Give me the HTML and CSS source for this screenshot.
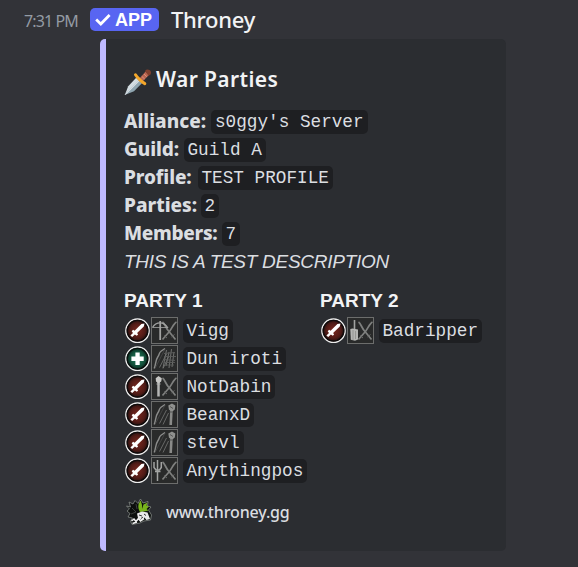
FILE: index.html
```html
<!DOCTYPE html>
<html lang="en">
<head>
<meta charset="UTF-8">
<meta name="viewport" content="width=device-width, initial-scale=1.0">
<title>Throney - War Parties</title>
<link rel="stylesheet" href="styles.css">
</head>
<body>
<!-- shared icons -->
<svg class="defs" width="0" height="0">
    <defs>
        <radialGradient id="redFill"><stop offset="0" stop-color="#79271e"/><stop offset="0.6" stop-color="#541c17"/><stop offset="1" stop-color="#1c0d0d"/></radialGradient>
        <radialGradient id="greenFill"><stop offset="0" stop-color="#23805d"/><stop offset="0.6" stop-color="#14543d"/><stop offset="1" stop-color="#071b15"/></radialGradient>
        <linearGradient id="blade" x1="0" y1="0" x2="1" y2="1"><stop offset="0.45" stop-color="#d3dde2"/><stop offset="0.55" stop-color="#8fa5b0"/></linearGradient>
    </defs>
    <symbol id="dps" viewBox="0 0 27 28">
        <circle cx="13.5" cy="13.7" r="11.6" fill="url(#redFill)" stroke="#ececec" stroke-width="1.5"/>
        <circle cx="13.5" cy="13.7" r="10.3" fill="none" stroke="#100b0b" stroke-width="1.3"/>
        <path d="M20.5 6.5L19.8 9.4L13.1 16.1L14.1 17.5L12.8 18.8L10.9 17.4L8.2 20.1L6.4 18.5L9 15.9L7.7 14.2L9.1 12.8L10.6 13.7L17.4 7Z" fill="#fff"/>
    </symbol>
    <symbol id="healer" viewBox="0 0 27 28">
        <circle cx="13.5" cy="13.7" r="11.6" fill="url(#greenFill)" stroke="#ececec" stroke-width="1.5"/>
        <circle cx="13.5" cy="13.7" r="10.3" fill="none" stroke="#08100d" stroke-width="1.3"/>
        <path d="M11.4 7.6h4.3v4h4v4.3h-4v4h-4.3v-4h-4v-4.3h4z" fill="#fff"/>
    </symbol>
    <symbol id="frame" viewBox="0 0 27 28">
        <rect x="0.5" y="0.5" width="26" height="26" fill="#292a2a" stroke="#6c6d6c"/>
    </symbol>
    <!-- crossed daggers, right half of a weapon icon -->
    <symbol id="daggers" viewBox="0 0 27 28">
        <g fill="none" stroke="#7f807f" stroke-width="1.7">
            <path d="M11.5 5C14 6.5 14.5 11 18 14.5L24.5 22.5"/>
            <path d="M25.5 5C22.5 6.5 21 11.5 18 15L11.5 22.5"/>
        </g>
        <path d="M13 18.5l3 2.5M20.5 20l3-2.5" stroke="#6a6b6a"/>
    </symbol>
    <symbol id="longbow" viewBox="0 0 27 28">
        <g fill="none" stroke="#8b8c8b">
            <path d="M3.2 23.5C5 19 4.5 15 7 11.5C8.5 9.5 7.8 8 10 6.2L14 3.5" stroke-width="1.4"/>
            <path d="M4 23.5L14 4" stroke="#555655" stroke-width="0.6"/>
            <path d="M8.5 22.5L15.5 9M12 23.5L17.5 12" stroke="#777877" stroke-width="0.8"/>
        </g>
    </symbol>
    <symbol id="crossbowDagger" viewBox="0 0 27 28">
        <use href="#frame"/><use href="#daggers"/>
        <g fill="none" stroke="#a2a3a2">
            <path d="M1.5 10.5C4 6 7 5.8 9.2 5.8S14 6.5 17 11" stroke-width="1.3"/>
            <path d="M1.5 10.5H16" stroke-width="0.8"/>
            <path d="M9.2 4V23" stroke-width="1.8"/>
        </g>
    </symbol>
    <symbol id="bowWand" viewBox="0 0 27 28">
        <use href="#frame"/><use href="#longbow"/>
        <g stroke="#777877" stroke-width="0.9" fill="none">
            <path d="M15.5 5L12 23M18 7L15 21M20.5 4L18 23M23 7L21 22"/>
            <path d="M13 8.5l11-1M13 11.5h12M13 14.5l11 1M13 17.5h11M14 20h9" stroke="#5c5d5c"/>
        </g>
    </symbol>
    <symbol id="wandDagger" viewBox="0 0 27 28">
        <use href="#frame"/><use href="#daggers"/>
        <path d="M7.5 9V23.5" stroke="#b5b6b5" stroke-width="2.5"/>
        <path d="M4.7 5.2L7.5 3L10.8 5.2L10.2 8.5L7.5 10.4L5 8.5Z" fill="#c7c7c5"/>
        <path d="M5.5 11h4" stroke="#b5b6b5"/>
    </symbol>
    <symbol id="bowStaff" viewBox="0 0 27 28">
        <use href="#frame"/><use href="#longbow"/>
        <path d="M20.5 9L19.7 24" stroke="#898a88" stroke-width="2.6"/>
        <path d="M17.3 4.5L21 2.5L24.3 4.5L23.8 8.5L21 10.8L18 8.8Z" fill="#8f908e"/>
        <path d="M19 5.5l3 2M18.5 11h3.5" stroke="#555655"/>
    </symbol>
    <symbol id="spearDagger" viewBox="0 0 27 28">
        <use href="#frame"/><use href="#daggers"/>
        <g fill="none" stroke="#a3a4a3" stroke-width="1.5">
            <path d="M6.5 3V24"/>
            <path d="M3 5V10.5L5 13H8.5L10.3 10.5V5"/>
            <path d="M4 14.5h5.5"/>
        </g>
    </symbol>
    <symbol id="swordDagger" viewBox="0 0 27 28">
        <use href="#frame"/><use href="#daggers"/>
        <path d="M7.5 3V13" stroke="#a2a3a2" stroke-width="1.6"/>
        <path d="M3.3 12L5.5 11.5L11 12.5V22.5L8 23.7L3.8 22.7Z" fill="#b5b6b4"/>
        <path d="M6 13V23M8.5 14V22" stroke="#858684" stroke-width="0.7"/>
    </symbol>
</svg>

<div class="message">
    <div class="header">
        <span class="time">7:31 PM</span>
        <span class="tag">
            <svg width="18" height="18" viewBox="0 0 18 18"><path d="M2.2 8.6L6.8 13L15.6 4" fill="none" stroke="#fff" stroke-width="2.8"/></svg>
            <b>APP</b>
        </span>
        <span class="username">Throney</span>
    </div>

    <div class="embed">
        <div class="title">
            <svg class="dagger" width="28" height="28" viewBox="0 0 28 28">
                <path d="M12.2 9.8L17.9 15.3L10 23.3L0.8 26.9L4.2 18.2Z" fill="url(#blade)"/>
                <path d="M1 26.8L15.3 12.5" stroke="#f0f4f5" stroke-width="0.7"/>
                <path d="M15.4 10.6L21.6 3.6L25 7L18.5 13.6Z" fill="#b96652"/>
                <path d="M17.8 8.4l3 2.8M20 6l2.8 2.8" stroke="#e39a80" stroke-width="0.8"/>
                <path d="M11.5 6.8Q13.2 9.4 15.2 11.2Q17.5 13.6 20.8 15.6" fill="none" stroke="#f4a72b" stroke-width="3" stroke-linecap="round"/>
                <path d="M21 2.9Q22.8 0.6 25.6 2Q28 4 26.4 6.6L24.6 7.8Z" fill="#81402e"/>
            </svg>
            <h2>War Parties</h2>
        </div>

        <div class="description">
            <p><strong class="w-alliance">Alliance:</strong><code>s0ggy's Server</code></p>
            <p><strong class="w-guild">Guild:</strong><code>Guild A</code></p>
            <p><strong class="w-profile">Profile:</strong><code>TEST PROFILE</code></p>
            <p><strong class="w-parties">Parties:</strong><code>2</code></p>
            <p><strong class="w-members">Members:</strong><code>7</code></p>
            <p><em>THIS IS A TEST DESCRIPTION</em></p>
        </div>

        <div class="parties">
            <div class="party">
                <h3>PARTY 1</h3>
                <div class="member"><svg><use href="#dps"/></svg><svg><use href="#crossbowDagger"/></svg><code>Vigg</code></div>
                <div class="member"><svg><use href="#healer"/></svg><svg><use href="#bowWand"/></svg><code>Dun iroti</code></div>
                <div class="member"><svg><use href="#dps"/></svg><svg><use href="#wandDagger"/></svg><code>NotDabin</code></div>
                <div class="member"><svg><use href="#dps"/></svg><svg><use href="#bowStaff"/></svg><code>BeanxD</code></div>
                <div class="member"><svg><use href="#dps"/></svg><svg><use href="#bowStaff"/></svg><code>stevl</code></div>
                <div class="member"><svg><use href="#dps"/></svg><svg><use href="#spearDagger"/></svg><code>Anythingpos</code></div>
            </div>
            <div class="party">
                <h3>PARTY 2</h3>
                <div class="member"><svg><use href="#dps"/></svg><svg><use href="#swordDagger"/></svg><code>Badripper</code></div>
            </div>
        </div>

        <div class="footer">
            <svg width="30" height="28" viewBox="0 0 30 28">
                <path d="M2.5 8L6.5 9L5 4L9 6L11 2.5L14 5.5L16.5 1L19 5L24 3.5L23.5 8L27 9L24.5 12L27.5 17L26.5 22L20 23L16 25L8 26.5L6.5 23L8.5 20L4 19L6 15.5L3 13L5.5 11Z" fill="#0c0f0d" stroke="#8f9591" stroke-width="0.7"/>
                <path d="M16 14C13 9 14.5 5 16.7 2.5L18 7L18 11L19.5 6.5L23.5 4.5L22.5 7.5L25 8.5L22.5 11L24.5 12.5L20 13.5Z" fill="#78b41c"/>
                <path d="M8 10l4 4-5 2M12 6l1 5" stroke="#3c403d" fill="none"/>
                <path d="M13 15.5L18 13.5L23.5 14.5L26 21L22.5 22L20.5 19.5L17.5 22L14 20Z" fill="#e8e8e8"/>
                <path d="M15 17l3 1M20 16l2 1.5M17 20.5l2-1.5" stroke="#323433" stroke-width="1"/>
                <path d="M7.5 23L10 21L12 23.5L14.5 20.5L16.5 23L20 20.5M8.5 25.5L13 24" stroke="#f0f0f0" stroke-width="1.6" fill="none"/>
            </svg>
            <span>www.throney.gg</span>
        </div>
    </div>
</div>
</body>
</html>
```
FILE: styles.css
```css
* {
    margin: 0;
    padding: 0;
    box-sizing: border-box;
}

body {
    background: #323338;
    color: #dbdee1;
    font-family: "Noto Sans", "Open Sans", sans-serif;
    font-size: 19px;
    overflow: hidden;
}

.defs {
    display: block;
}

.message {
    height: 567px;
}

.header {
    display: flex;
    align-items: center;
    height: 39px;
    padding-left: 24px;
    white-space: nowrap;
}

.time {
    width: 66px;
    font-size: 16px;
    letter-spacing: -0.9px;
    color: #949ba4;
    padding-top: 2px;
}

.tag {
    display: flex;
    align-items: center;
    width: 69px;
    height: 23px;
    padding-left: 4px;
    gap: 3px;
    background: #5865f2;
    border-radius: 5px;
    color: #fff;
    font-family: "Liberation Sans", sans-serif;
    font-size: 18px;
}

.tag b {
    font-weight: 700;
    padding-top: 1px;
}

.username {
    margin-left: 12px;
    margin-top: -2px;
    font-size: 22px;
    font-weight: 500;
    letter-spacing: -0.3px;
    color: #f2f3f5;
}

.embed {
    width: 406px;
    height: 512px;
    margin-left: 100px;
    padding: 26px 18px 0;
    background: #2b2d31;
    border-left: 6px solid #bfbaff;
    border-radius: 5px;
}

.title {
    display: flex;
    align-items: center;
    height: 28px;
    gap: 4px;
    color: #f2f3f5;
}

.title svg {
    position: relative;
    top: 3px;
}

h2 {
    font-size: 21px;
    font-weight: 600;
    letter-spacing: 0.4px;
    white-space: nowrap;
}

.description {
    margin-top: 15px;
}

.description p {
    display: flex;
    align-items: center;
    height: 28px;
    white-space: nowrap;
}

.description strong {
    font-weight: 800;
    line-height: 28px;
    padding-bottom: 2px;
}

.w-alliance {
    width: 87px;
}

.w-guild {
    width: 59.5px;
    letter-spacing: -0.1px;
}

.w-profile {
    width: 73.5px;
    letter-spacing: -0.1px;
}

.w-parties {
    width: 76.5px;
}

.w-members {
    width: 97.5px;
    letter-spacing: -0.3px;
}

em {
    font-family: "Liberation Sans", sans-serif;
    font-size: 19px;
    letter-spacing: -0.27px;
}

code {
    height: 24px;
    padding: 0 4px;
    background: #1e1f22;
    border-radius: 5px;
    font-family: "Liberation Mono", monospace;
    font-size: 17.7px;
    line-height: 25px;
    white-space: pre;
}

.parties {
    display: grid;
    grid-template-columns: 196px 1fr;
    margin-top: 11px;
}

h3 {
    height: 30px;
    line-height: 27px;
    font-family: "Liberation Sans", sans-serif;
    font-size: 19px;
    font-weight: 700;
    color: #f2f3f5;
}

.member {
    display: flex;
    align-items: center;
    height: 28px;
}

.member svg {
    width: 27px;
    height: 28px;
}

.member code {
    margin-left: 4.5px;
}

.footer {
    display: flex;
    align-items: center;
    height: 30px;
    margin-top: 12px;
    gap: 12px;
    font-size: 16px;
    font-weight: 500;
    letter-spacing: -0.15px;
}
```
